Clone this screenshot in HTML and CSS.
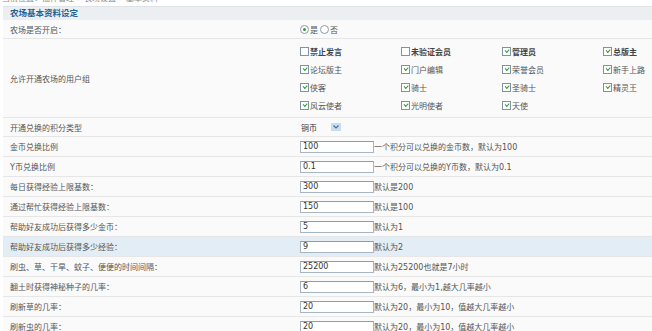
FILE: index.html
```html
<!DOCTYPE html>
<html lang="zh-CN">
<head>
    <meta charset="UTF-8">
    <title>农场基本资料设定</title>
    <link rel="stylesheet" href="styles.css">
</head>
<body>
    <!-- 当前位置 -->
    <div class="crumb"><span>当前位置：插件管理 &raquo; 农场设置 &raquo; 基本资料</span></div>

    <div class="panel">
        <div class="panel-title">农场基本资料设定</div>

        <div class="row row-short">
            <div class="label">农场是否开启：</div>
            <div class="value">
                <label class="radio"><span class="radio-box on"></span>是</label>
                <label class="radio"><span class="radio-box"></span>否</label>
            </div>
        </div>

        <!-- 用户组 -->
        <div class="row row-groups">
            <div class="label">允许开通农场的用户组</div>
            <div class="value groups">
                <label class="check bold"><span class="box"></span>禁止发言</label>
                <label class="check bold"><span class="box"></span>未验证会员</label>
                <label class="check bold"><span class="box on"></span>管理员</label>
                <label class="check bold"><span class="box on"></span>总版主</label>
                <label class="check"><span class="box on"></span>论坛版主</label>
                <label class="check"><span class="box on"></span>门户编辑</label>
                <label class="check"><span class="box on"></span>荣誉会员</label>
                <label class="check"><span class="box on"></span>新手上路</label>
                <label class="check"><span class="box on"></span>侠客</label>
                <label class="check"><span class="box on"></span>骑士</label>
                <label class="check"><span class="box on"></span>圣骑士</label>
                <label class="check"><span class="box on"></span>精灵王</label>
                <label class="check"><span class="box on"></span>风云使者</label>
                <label class="check"><span class="box on"></span>光明使者</label>
                <label class="check"><span class="box on"></span>天使</label>
            </div>
        </div>

        <div class="row row-short">
            <div class="label">开通兑换的积分类型</div>
            <div class="value">
                <div class="select">
                    <span>铜币</span>
                    <span class="select-arrow">
                        <svg width="6" height="4" viewBox="0 0 6 4"><polyline points="0.5,0.5 3,3 5.5,0.5" fill="none" stroke="#3a72b8" stroke-width="1.2"/></svg>
                    </span>
                </div>
            </div>
        </div>

        <div class="row">
            <div class="label">金币兑换比例</div>
            <div class="value"><input class="text" type="text" value="100"><span class="desc">一个积分可以兑换的金币数，默认为100</span></div>
        </div>
        <div class="row">
            <div class="label">Y币兑换比例</div>
            <div class="value"><input class="text" type="text" value="0.1"><span class="desc">一个积分可以兑换的Y币数，默认为0.1</span></div>
        </div>
        <div class="row">
            <div class="label">每日获得经验上限基数：</div>
            <div class="value"><input class="text" type="text" value="300"><span class="desc">默认是200</span></div>
        </div>
        <div class="row">
            <div class="label">通过帮忙获得经验上限基数：</div>
            <div class="value"><input class="text" type="text" value="150"><span class="desc">默认是100</span></div>
        </div>
        <div class="row">
            <div class="label">帮助好友成功后获得多少金币：</div>
            <div class="value"><input class="text" type="text" value="5"><span class="desc">默认为1</span></div>
        </div>
        <div class="row row-hover">
            <div class="label">帮助好友成功后获得多少经验：</div>
            <div class="value"><input class="text" type="text" value="9"><span class="desc">默认为2</span></div>
        </div>
        <div class="row">
            <div class="label">刷虫、草、干旱、蚊子、便便的时间间隔：</div>
            <div class="value"><input class="text" type="text" value="25200"><span class="desc">默认为25200也就是7小时</span></div>
        </div>
        <div class="row">
            <div class="label">翻土时获得神秘种子的几率：</div>
            <div class="value"><input class="text" type="text" value="6"><span class="desc">默认为6，最小为1,越大几率越小</span></div>
        </div>
        <div class="row">
            <div class="label">刷新草的几率：</div>
            <div class="value"><input class="text" type="text" value="20"><span class="desc">默认为20，最小为10，值越大几率越小</span></div>
        </div>
        <div class="row">
            <div class="label">刷新虫的几率：</div>
            <div class="value"><input class="text" type="text" value="20"><span class="desc">默认为20，最小为10，值越大几率越小</span></div>
        </div>
    </div>
</body>
</html>
```

FILE: styles.css
```css
body {
    margin: 0;
    background: #fff;
    font-family: "DejaVu Sans", "Noto Sans CJK SC", sans-serif;
    font-size: 8px;
    color: #555;
}

.crumb {
    height: 6px;
    overflow: hidden;
    padding-left: 2px;
    color: #888;
}

.crumb span {
    display: block;
    margin-top: -7px;
    line-height: 12px;
}

.panel {
    margin-left: 3px;
    background: #fafafa;
}

.panel-title {
    height: 13px;
    line-height: 13px;
    padding-left: 7px;
    border-top: 1px solid #dfe3e7;
    background: #eceff2;
    color: #1f6195;
    font-weight: bold;
    font-size: 8.5px;
}

.row {
    display: flex;
    align-items: center;
    height: 19px;
    border-bottom: 1px solid #e6e6e6;
}

.row-short {
    height: 18px;
}

.row-groups {
    height: 78px;
}

.row-hover {
    background: #e3edf5;
}

.label {
    width: 297px;
    box-sizing: border-box;
    padding-left: 7px;
    flex-shrink: 0;
}

.value {
    flex: 1;
    display: flex;
    align-items: center;
}

/* 单选 */
.radio {
    display: inline-flex;
    align-items: center;
    margin-right: 2px;
}

.radio-box {
    width: 7px;
    height: 7px;
    border: 1px solid #8e9caa;
    border-radius: 50%;
    background: #fff;
    margin-right: 1px;
    display: inline-flex;
    align-items: center;
    justify-content: center;
}

.radio-box.on::after {
    content: "";
    width: 3px;
    height: 3px;
    border-radius: 50%;
    background: #3b8f3b;
}

/* 用户组复选框 */
.groups {
    display: grid;
    grid-template-columns: repeat(4, 101px);
    grid-auto-rows: 18px;
    align-items: center;
    padding: 3px 0;
}

.check {
    display: flex;
    align-items: center;
}

.check.bold {
    font-weight: bold;
    color: #444;
}

.box {
    width: 7px;
    height: 7px;
    border: 1px solid #7f93a6;
    background: #fff;
    margin-right: 1px;
    display: inline-flex;
    align-items: center;
    justify-content: center;
}

.box.on::after {
    content: "";
    width: 3px;
    height: 1.5px;
    margin-top: -1px;
    border-left: 1.5px solid #2f9a2f;
    border-bottom: 1.5px solid #2f9a2f;
    transform: rotate(-45deg);
}

/* 下拉框 */
.select {
    display: flex;
    align-items: center;
    width: 40px;
    height: 10px;
    padding-left: 1px;
    color: #333;
}

.select-arrow {
    margin-left: auto;
    width: 10px;
    height: 8px;
    background: #cddcec;
    display: flex;
    align-items: center;
    justify-content: center;
}

/* 输入框 */
.text {
    width: 74px;
    height: 12px;
    box-sizing: border-box;
    margin: 0;
    padding: 0 2px;
    border: 1px solid #a8b6c4;
    border-top-color: #8d9cab;
    background: #fff;
    font-family: "DejaVu Sans", "Noto Sans CJK SC", sans-serif;
    font-size: 8px;
    color: #333;
}

.desc {
    color: #555;
}
```
